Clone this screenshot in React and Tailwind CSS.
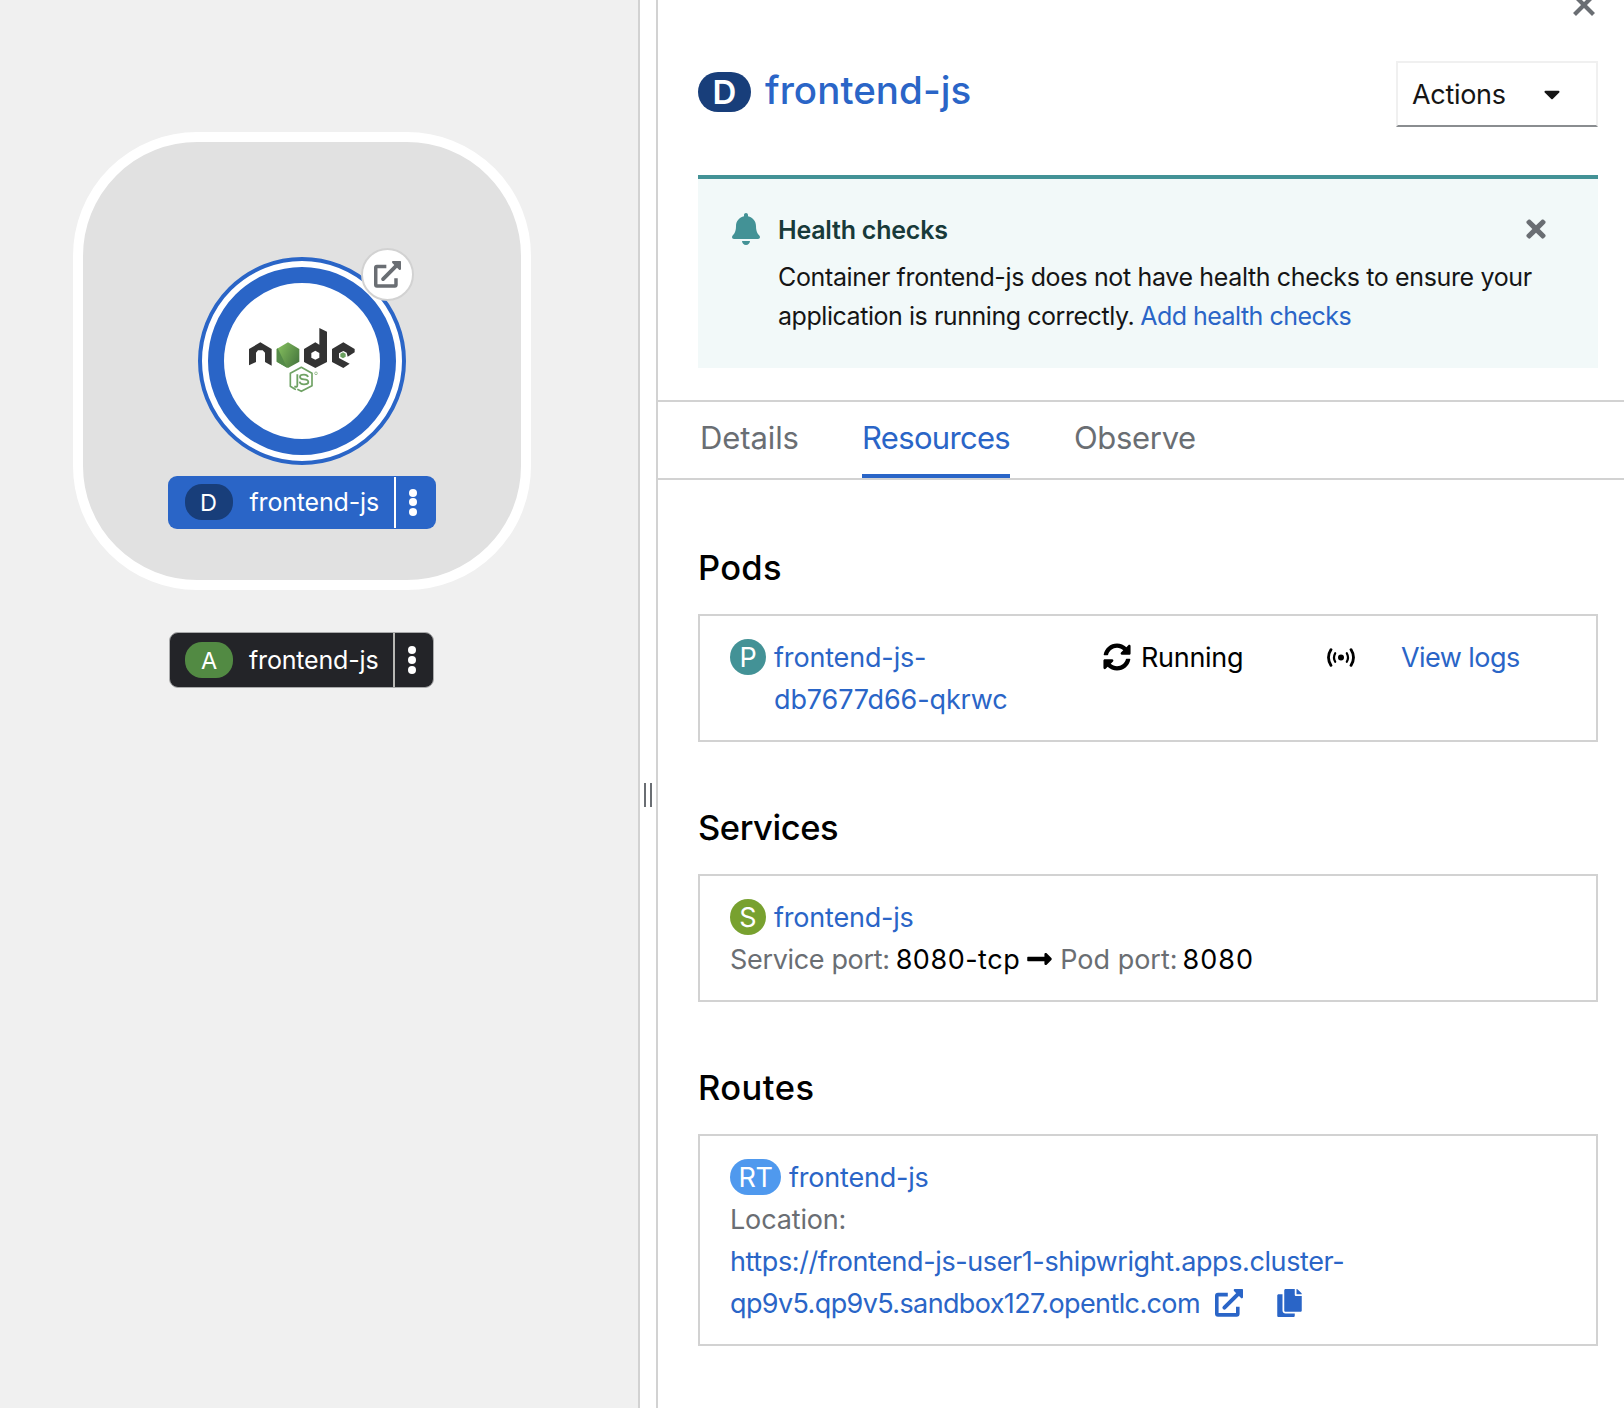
import React from "react";
import { FaBell, FaCaretDown, FaCopy, FaLongArrowAltRight, FaSyncAlt, FaTimes } from "react-icons/fa";

function ExternalLinkIcon({ className }) {
  return (
    <svg viewBox="0 0 28 28" className={className} fill="none" stroke="currentColor">
      <path d="M12.8 5.6H3Q1.8 5.6 1.8 6.8V24.7Q1.8 25.9 3 25.9H21.6Q22.8 25.9 22.8 24.7V17.8" strokeWidth="3.6" />
      <path d="M9.4 18.7L22.5 5.6" strokeWidth="4" strokeLinecap="round" />
      <path d="M19.4 0H27.2Q28 0 28 .8V8.6Q27.2 10 26 9L19 2Q18 .8 19.4 0Z" fill="currentColor" stroke="none" />
    </svg>
  );
}

function SignalIcon() {
  return (
    <svg viewBox="0 0 28 19" className="h-[19px] w-[28px]" fill="none" stroke="currentColor" strokeLinecap="round">
      <circle cx="14" cy="9.5" r="3" fill="currentColor" stroke="none" />
      <path d="M8.2 5.2Q5.8 9.5 8.2 13.8M19.8 5.2Q22.2 9.5 19.8 13.8" strokeWidth="2.2" />
      <path d="M4 1.6Q-1 9.5 4 17.4M24 1.6Q29 9.5 24 17.4" strokeWidth="2.8" />
    </svg>
  );
}

function NodeLogo() {
  return (
    <svg viewBox="177 264 318 195" className="h-[65px] w-[106px]">
      <defs>
        <linearGradient id="leaf" x1="0" y1="0" x2="1" y2="0.6">
          <stop offset="0.2" stopColor="#7db65a" />
          <stop offset="1" stopColor="#4c7d41" />
        </linearGradient>
      </defs>
      <g fill="#333333">
        <path d="M177 376V327L211 307L245 327V377L225 366V338L218 331H204L198 338V366Z" />
        <path fillRule="evenodd" d="M342 327L376 307L388 314V264L411 275V366L376 384L342 366ZM376 332L364 339V353L376 359L388 353V339Z" />
        <path d="M426 327L460 307L494 327V337L473 350L470 338L460 333L447 340V354L458 360L479 371L460 384L426 366Z" />
      </g>
      <path d="M260 327L294 307L328 327V365L294 384L260 365Z" fill="url(#leaf)" />
      <path d="M263 325L292 384L260 365V327Z" fill="#558b49" />
      <path d="M459 337L467 341.500V350.500L459 355L451 350.500V341.500Z" fill="#6aa05f" />
      <path d="M318 448L314 447L301 439V400L334 382L366 400V437L334 454L322 448" fill="none" stroke="#6fa264" strokeWidth="5" strokeLinejoin="round" />
      <path d="M322 403V435Q322 444 313 439" fill="none" stroke="#6fa264" strokeWidth="5.500" />
      <path d="M354 411Q352 404 342 404Q330 404 330 411Q330 417 342 418Q355 419 355 426Q355 433 342 433Q330 433 329 425" fill="none" stroke="#6fa264" strokeWidth="5.500" />
      <circle cx="378" cy="400" r="4" fill="none" stroke="#9dc095" strokeWidth="3" />
    </svg>
  );
}

function Kebab() {
  return (
    <span className="flex flex-col gap-[1.700px]">
      <span className="size-[8px] rounded-full bg-white" />
      <span className="size-[8px] rounded-full bg-white" />
      <span className="size-[8px] rounded-full bg-white" />
    </span>
  );
}

function Topology() {
  return (
    <div className="relative h-full w-[638px] shrink-0 bg-[#f0f0f0]">
      <div className="absolute left-[73px] top-[132px] size-[458px] rounded-[124px] border-[10px] border-white bg-[#e1e1e1]" />
      <div className="absolute left-[198px] top-[256.500px] flex size-[208px] items-center justify-center rounded-full border-[4px] border-[#2a65c7] bg-white">
        <div className="flex size-[188px] items-center justify-center rounded-full border-[16px] border-[#2a65c7] bg-white">
          <NodeLogo />
        </div>
      </div>
      <div className="absolute left-[361px] top-[248px] flex size-[53px] items-center justify-center rounded-full border-2 border-[#d2d2d2] bg-white text-[#6a6e73]">
        <ExternalLinkIcon className="size-[27px]" />
      </div>

      <div className="absolute left-[167.500px] top-[475.500px] flex h-[53.500px] w-[268.500px] items-center rounded-[9px] bg-[#2a65c7] text-[25px] text-white">
        <span className="ml-[17px] flex h-[36px] w-[48px] items-center justify-center rounded-[17px] bg-[#183e7a] pt-px text-[23.500px]">D</span>
        <span className="ml-[17px] w-[144.500px] whitespace-nowrap pt-px tracking-[-0.170px]">frontend-js</span>
        <span className="mr-[13px] h-[51px] w-[2px] bg-white" />
        <Kebab />
      </div>

      <div className="absolute left-[169px] top-[632px] flex h-[56px] w-[265px] items-center rounded-[9px] border border-[#a9aaab] bg-[#232428] text-[25px] text-white">
        <span className="ml-[15px] flex h-[36px] w-[48px] items-center justify-center rounded-[17px] bg-[#528a43] pt-px text-[23.500px]">A</span>
        <span className="ml-[16px] w-[144px] whitespace-nowrap pt-px tracking-[-0.170px]">frontend-js</span>
        <span className="mr-[13px] h-[54px] w-[2px] bg-[#b8b8b5]" />
        <Kebab />
      </div>
    </div>
  );
}

function Splitter() {
  return (
    <div className="flex h-full w-[20px] shrink-0 items-center justify-center gap-[4px] border-x-2 border-[#d2d2d2] bg-white pt-[182px]">
      <span className="h-[24px] w-[2px] bg-[#6a6e73]" />
      <span className="h-[24px] w-[2px] bg-[#6a6e73]" />
    </div>
  );
}

function Heading({ children, className }) {
  return <h2 className={`h-[50px] whitespace-nowrap text-[34.500px] font-medium leading-[50px] ${className}`}>{children}</h2>;
}

function Card({ children, className }) {
  return <div className={`w-[900px] border-2 border-[#d2d2d2] pl-[30px] pt-[21px] text-[27px] leading-[42px] ${className}`}>{children}</div>;
}

export default function App() {
  return (
    <div className="flex h-[1408px] w-[1624px] overflow-hidden bg-white font-['Inter',sans-serif] text-black">
      <Topology />
      <Splitter />
      <main className="flex min-w-0 flex-1 flex-col">
        <header className="h-[400px] pl-[40px] pr-[26px]">
          <div className="flex h-[61px] justify-end pr-[3px]">
            <svg viewBox="0 0 22 22" className="mt-[-6px] size-[22px]" stroke="#6a6e73" strokeWidth="4.200">
              <path d="M1.500 1.500L20.500 20.500M20.500 1.500L1.500 20.500" />
            </svg>
          </div>
          <div className="flex h-[114px] items-start">
            <span className="mt-[11px] flex h-[40px] w-[53px] items-center justify-center rounded-[20px] bg-[#183e7a] text-[33px] font-semibold leading-[40px] text-white">D</span>
            <h1 className="ml-[14px] mt-[4px] whitespace-nowrap text-[38.500px] font-medium leading-[50px] tracking-[0.050px] text-[#2a65c7]">frontend-js</h1>
            <button className="ml-auto flex h-[66px] w-[202px] items-center border-2 border-[#f0f0f0] border-b-[#8a8d90] pl-[14px] text-[27px] text-[#151515]">
              <span className="w-[127px] pt-[2px] text-left tracking-[-0.300px]">Actions</span>
              <FaCaretDown className="size-[26px]" />
            </button>
          </div>
          <section className="flex h-[193px] border-t-[4px] border-[#439296] bg-[#f2f9f9] pl-[34px] pt-[32px] text-[25px] leading-[39px] text-[#151515]">
            <FaBell className="mt-[2px] h-[32px] w-[28px] text-[#439296]" />
            <div className="ml-[18px] w-[744px] whitespace-nowrap">
              <h4 className="mb-[8px] font-semibold tracking-[-0.220px] text-[#183a3a]">Health checks</h4>
              <p className="tracking-[-0.360px]">Container frontend-js does not have health checks to ensure your</p>
              <p className="flex gap-[6px]">
                <span className="tracking-[-0.450px]">application is running correctly.</span>
                <span className="tracking-[-0.520px] text-[#2a65c7]">Add health checks</span>
              </p>
            </div>
            <FaTimes className="mt-[4px] size-[28px] text-[#6a6e73]" />
          </section>
        </header>

        <nav className="flex h-[80px] border-y-2 border-[#d2d2d2] pl-[40px] text-[31px] leading-[72px] text-[#6a6e73]">
          <span className="w-[164px] pl-[2px] tracking-[-0.100px]">Details</span>
          <span className="h-[76px] w-[148px] whitespace-nowrap border-b-[4px] border-[#2a65c7] tracking-[-0.680px] text-[#2a65c7]">Resources</span>
          <span className="ml-[64px] tracking-[-0.330px]">Observe</span>
        </nav>

        <div className="pl-[40px] pt-[63px]">
          <Heading className="tracking-[0.300px]">Pods</Heading>
          <Card className="mt-[21px] grid h-[128px] grid-cols-[373px_224px_74px_1fr] items-start">
            <div className="flex">
              <span className="mr-[8px] mt-[2px] flex size-[36px] items-center justify-center rounded-full bg-[#439296] pt-px text-white">P</span>
              <span className="whitespace-nowrap text-[#2a65c7]">
                <span className="block tracking-[-0.160px]">frontend-js-</span>
                <span className="block tracking-[-0.130px]">db7677d66-qkrwc</span>
              </span>
            </div>
            <div className="flex items-center gap-[10px]">
              <FaSyncAlt className="mt-[-2px] size-[28px]" />
              <span className="tracking-[-0.300px]">Running</span>
            </div>
            <div className="flex h-[40px] items-center"><SignalIcon /></div>
            <span className="whitespace-nowrap tracking-[-0.550px] text-[#2a65c7]">View logs</span>
          </Card>

          <Heading className="mt-[61px] tracking-[-0.450px]">Services</Heading>
          <Card className="mt-[21px] h-[128px]">
            <div className="flex">
              <span className="mr-[8px] mt-[2px] flex size-[36px] items-center justify-center rounded-full bg-[#78a12f] pt-px text-white">S</span>
              <span className="whitespace-nowrap tracking-[-0.200px] text-[#2a65c7]">frontend-js</span>
            </div>
            <div className="flex items-center whitespace-nowrap">
              <span className="mr-[6px] tracking-[-0.340px] text-[#6a6e73]">Service port:</span>
              <span className="tracking-[0.520px]">8080-tcp</span>
              <FaLongArrowAltRight className="ml-[7px] mr-[8px] mt-[-2px] h-[28px] w-[25px]" />
              <span className="mr-[5px] tracking-[0px] text-[#6a6e73]">Pod port:</span>
              <span className="tracking-[1px]">8080</span>
            </div>
          </Card>

          <Heading className="mt-[61px] tracking-[0.450px]">Routes</Heading>
          <Card className="mt-[21px] h-[212px]">
            <div className="flex">
              <span className="mr-[8px] mt-[2px] flex h-[36px] w-[51px] items-center justify-center rounded-[18px] bg-[#4f99ee] pt-px tracking-[-0.500px] text-white">RT</span>
              <span className="whitespace-nowrap tracking-[-0.200px] text-[#2a65c7]">frontend-js</span>
            </div>
            <div className="tracking-[-0.150px] text-[#6a6e73]">Location:</div>
            <div className="whitespace-nowrap tracking-[-0.400px] text-[#2a65c7]">https://frontend-js-user1-shipwright.apps.cluster-</div>
            <div className="flex items-center whitespace-nowrap text-[#2a65c7]">
              <span className="w-[485px] tracking-[-0.620px]">qp9v5.qp9v5.sandbox127.opentlc.com</span>
              <ExternalLinkIcon className="mt-[-2px] size-[28px]" />
              <FaCopy className="ml-[33.500px] mt-[-2px] h-[28px] w-[25px]" />
            </div>
          </Card>
        </div>
      </main>
    </div>
  );
}
